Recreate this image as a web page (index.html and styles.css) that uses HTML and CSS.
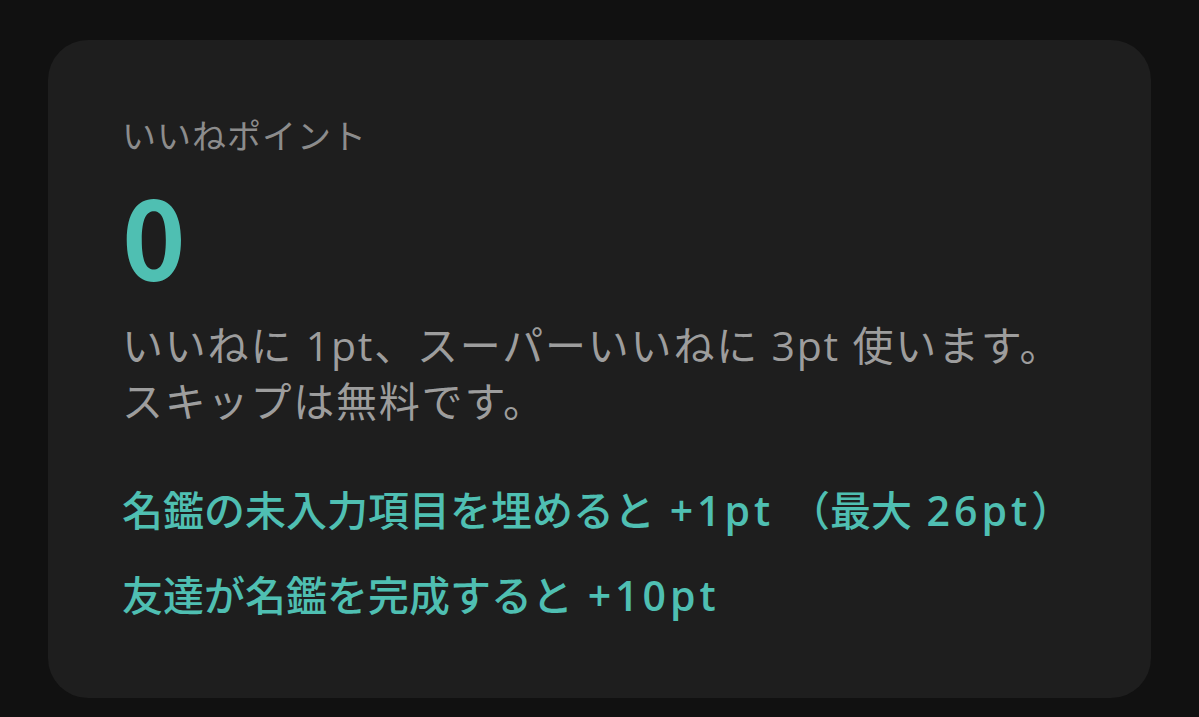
FILE: index.html
```html
<!DOCTYPE html>
<html lang="ja">
<head>
<meta charset="utf-8">
<link rel="stylesheet" href="styles.css">
</head>
<body>
<div class="card">
  <div class="title">いいねポイント</div>
  <div class="points">0</div>
  <p class="desc">いいねに 1pt、スーパーいいねに 3pt 使います。<br>スキップは無料です。</p>
  <p class="bonus bonus-first">名鑑の未入力項目を埋めると<span class="lat"> +1pt </span>（最大<span class="lat"> 26pt</span>）</p>
  <p class="bonus bonus-second">友達が名鑑を完成すると<span class="lat"> +10pt</span></p>
</div>
</body>
</html>
```

FILE: styles.css
```css
html, body {
  margin: 0;
  padding: 0;
  background: #111111;
}
body {
  font-family: "Open Sans", "Noto Sans CJK JP", sans-serif;
  padding: 40px 48px 0 48px;
  height: 717px;
  box-sizing: border-box;
  overflow: hidden;
}
.card {
  width: 1103px;
  height: 658px;
  box-sizing: border-box;
  background: #1e1e1e;
  border-radius: 40px;
  padding: 76px 74px 0 74px;
  display: flex;
  flex-direction: column;
}
.title {
  font-size: 34px;
  line-height: 40px;
  color: #8c8c8c;
  letter-spacing: 1px;
}
.points {
  margin-top: 22px;
  font-family: "Noto Sans CJK JP", sans-serif;
  font-size: 108px;
  line-height: 110px;
  font-weight: 700;
  color: #4fbfb2;
}
.desc {
  margin: 29px 0 0 0;
  font-size: 41px;
  line-height: 56px;
  color: #9d9d9d;
  font-weight: 400;
  letter-spacing: 1.8px;
}
.bonus {
  margin: 0;
  font-size: 41px;
  line-height: 56px;
  color: #4fbfb2;
  font-weight: 500;
}
.bonus .lat {
  font-weight: 600;
  letter-spacing: 4px;
}
.bonus-first { margin-top: 53px; }
.bonus-second { margin-top: 29px; }
```
